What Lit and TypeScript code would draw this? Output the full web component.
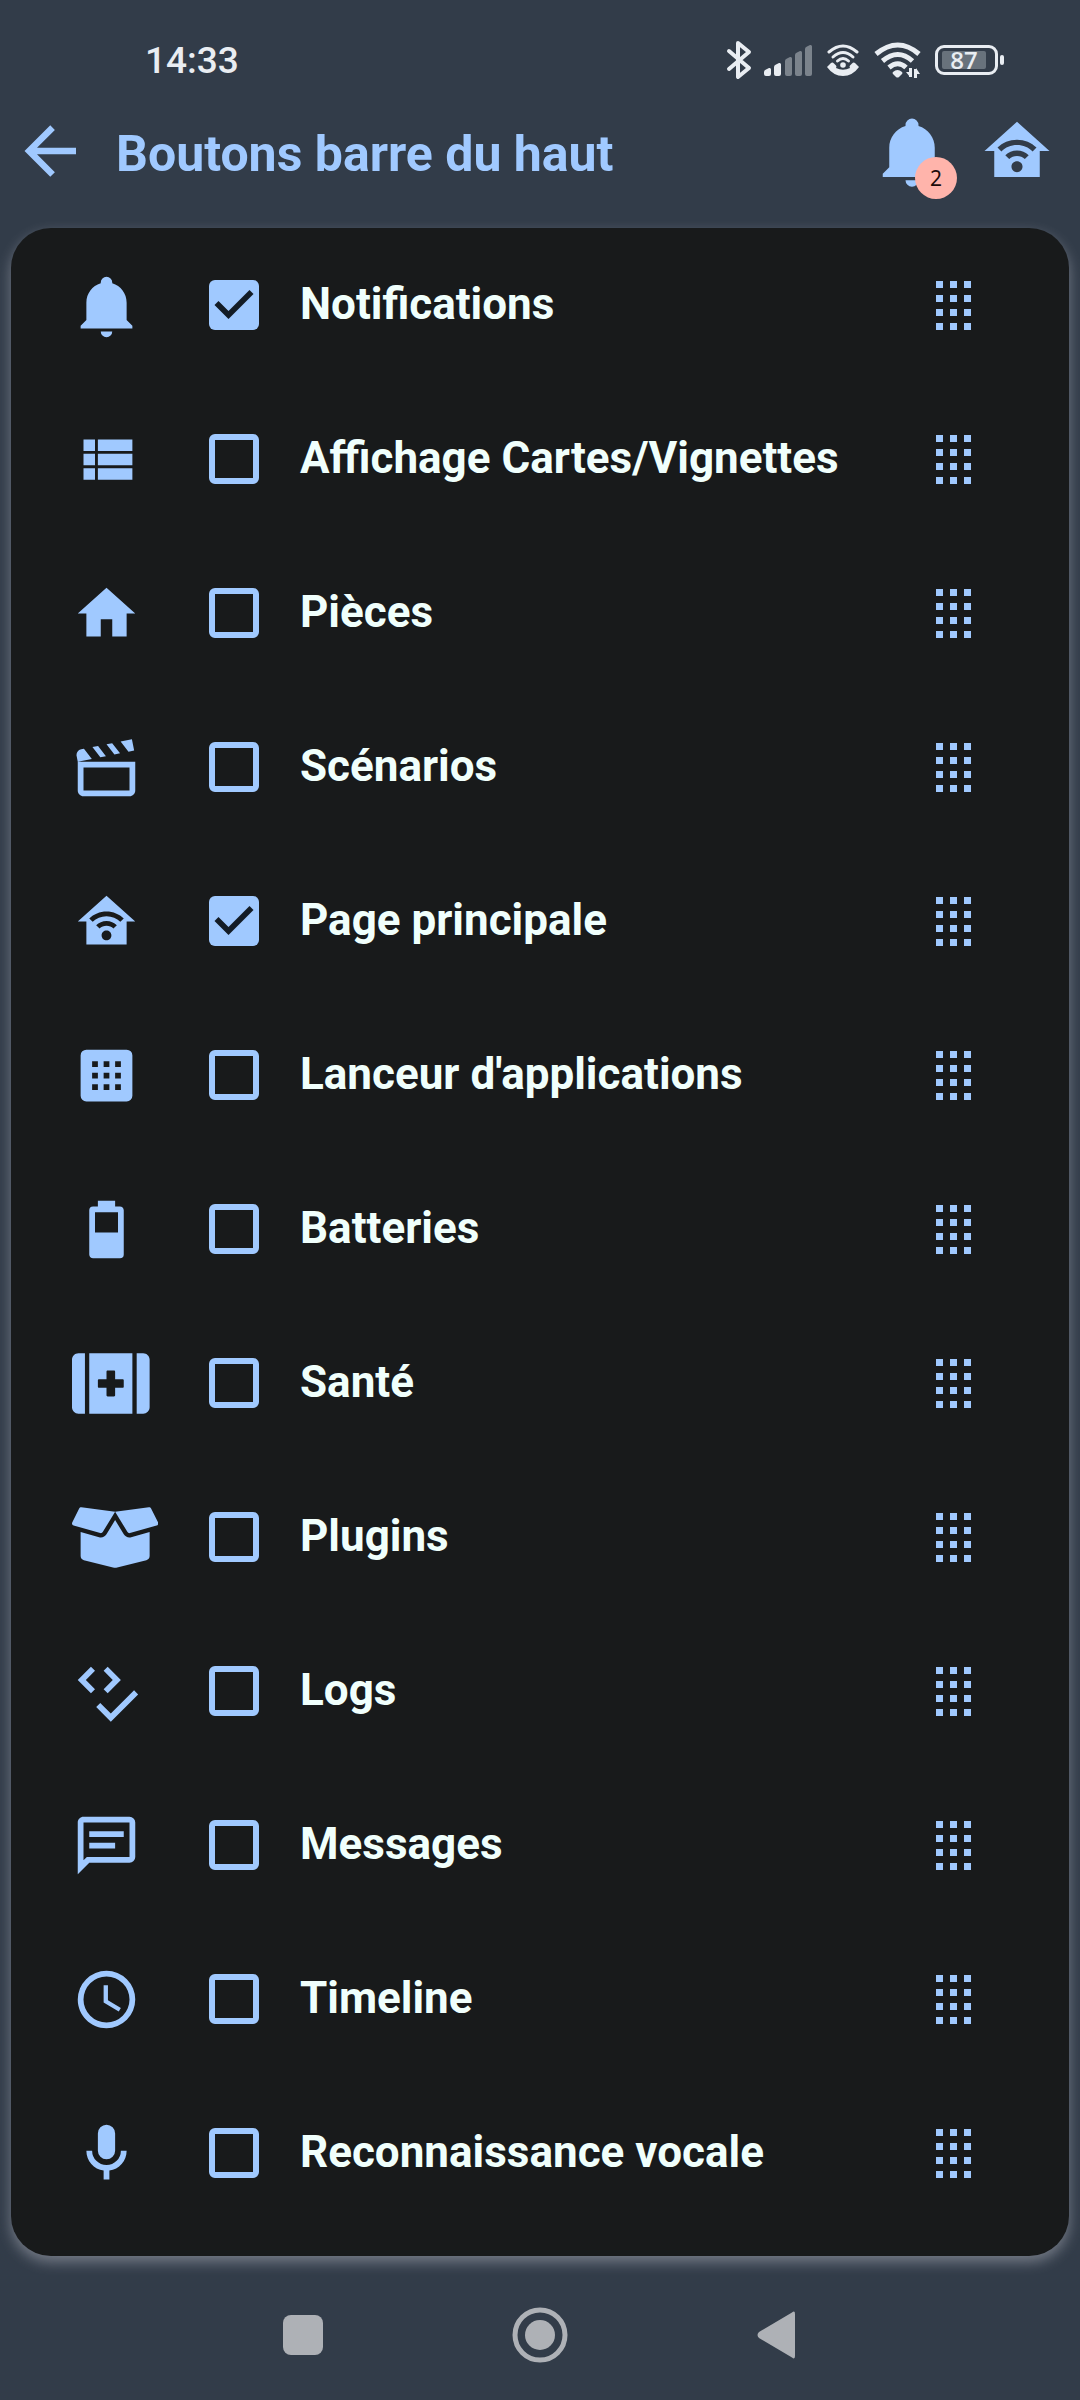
import { LitElement, html, svg, css, nothing } from "lit";
import { customElement, property, state } from "lit/decorators.js";

interface Glyph {
  width: number;
  height: number;
  path: string;
}

const glyph = (path: string, width = 24, height = 24): Glyph => ({ width, height, path });

const GLYPHS: Record<string, Glyph> = {
  back: glyph("M20,11V13H8L13.5,18.5L12.08,19.92L4.16,12L12.08,4.08L13.5,5.5L8,11H20Z"),
  bell: glyph("M21,19V20H3V19L5,17V11C5,7.9 7.03,5.17 10,4.29C10,4.19 10,4.1 10,4A2,2 0 0,1 12,2A2,2 0 0,1 14,4C14,4.1 14,4.19 14,4.29C16.97,5.17 19,7.9 19,11V17L21,19M14,21A2,2 0 0,1 12,23A2,2 0 0,1 10,21"),
  list: glyph("M9,5V9H21V5M9,19H21V15H9M9,14H21V10H9M4,9H8V5H4M4,19H8V15H4M4,14H8V10H4V14Z"),
  home: glyph("M10,20V14H14V20H19V12H22L12,3L2,12H5V20H10Z"),
  movie: glyph("M20.84 2.18L16.91 2.96L19.65 6.5L21.62 6.1L20.84 2.18M13.97 3.54L12 3.93L14.75 7.46L16.71 7.07L13.97 3.54M9.07 4.5L7.1 4.91L9.85 8.44L11.81 8.05L9.07 4.5M4.16 5.5L3.18 5.69A2 2 0 0 0 1.61 8.04L2 10L6.9 9.03L4.16 5.5M2 10V20C2 21.11 2.9 22 4 22H20C21.11 22 22 21.11 22 20V10H2M4 12H20V20H4V12Z"),
  homeWifi: glyph("M12,3L2,12H5V20H19V12H22L12,3M12,8.5C14.34,8.5 16.46,9.43 18,10.94L16.8,12.12C15.58,10.91 13.88,10.17 12,10.17C10.12,10.17 8.42,10.91 7.2,12.12L6,10.94C7.54,9.43 9.66,8.5 12,8.5M12,11.83C13.4,11.83 14.67,12.39 15.6,13.3L14.4,14.47C13.79,13.87 12.94,13.5 12,13.5C11.06,13.5 10.21,13.87 9.6,14.47L8.4,13.3C9.33,12.39 10.6,11.83 12,11.83M12,15.17C12.94,15.17 13.7,15.91 13.7,16.83C13.7,17.75 12.94,18.5 12,18.5C11.06,18.5 10.3,17.75 10.3,16.83C10.3,15.91 11.06,15.17 12,15.17Z"),
  launcher: glyph("M5,3H19A2,2 0 0,1 21,5V19A2,2 0 0,1 19,21H5A2,2 0 0,1 3,19V5A2,2 0 0,1 5,3M7,7V9H9V7H7M11,7V9H13V7H11M15,7V9H17V7H15M7,11V13H9V11H7M11,11V13H13V11H11M15,11V13H17V11H15M7,15V17H9V15H7M11,15V17H13V15H11M15,15V17H17V15H15Z"),
  battery: glyph("M16,13H8V6H16M16.67,4H15V2H9V4H7.33A1.33,1.33 0 0,0 6,5.33V20.67C6,21.4 6.6,22 7.33,22H16.67A1.33,1.33 0 0,0 18,20.67V5.33C18,4.6 17.4,4 16.67,4Z"),
  health: glyph("M0 80v352c0 26.5 21.5 48 48 48h48V32H48C21.5 32 0 53.5 0 80zm128 400h320V32H128v448zm64-248c0-4.4 3.6-8 8-8h56v-56c0-4.4 3.6-8 8-8h48c4.4 0 8 3.6 8 8v56h56c4.4 0 8 3.6 8 8v48c0 4.4-3.6 8-8 8h-56v56c0 4.4-3.6 8-8 8h-48c-4.4 0-8-3.6-8-8v-56h-56c-4.4 0-8-3.6-8-8v-48zM528 32h-48v448h48c26.5 0 48-21.5 48-48V80c0-26.5-21.5-48-48-48z", 576, 512),
  box: glyph("M425.7 256c-16.9 0-32.8-9-41.4-23.4L320 126l-64.2 106.6c-8.7 14.5-24.6 23.5-41.5 23.5-4.5 0-9-.6-13.3-1.9L64 215v178c0 14.7 10 27.5 24.2 31l216.2 54.1c10.2 2.5 20.9 2.5 31 0L551.8 424c14.2-3.6 24.2-16.4 24.2-31V215l-137 39.1c-4.3 1.3-8.8 1.9-13.3 1.9zm212.6-112.2L586.8 41c-3.1-6.2-9.8-9.8-16.7-8.9L320 64l91.7 152.1c3.8 6.3 11.4 9.3 18.5 7.3l197.9-56.5c9.9-2.9 14.7-13.9 10.2-23.1zM53.2 41L1.7 143.8c-4.6 9.2.3 20.2 10.1 23l197.9 56.5c7.1 2 14.7-1 18.5-7.3L320 64 69.8 32.1c-6.9-.8-13.5 2.7-16.6 8.9z", 640, 512),
  logs: glyph("M6.59,3.41L2,8L6.59,12.6L8,11.18L4.82,8L8,4.82L6.59,3.41M12.41,3.41L11,4.82L14.18,8L11,11.18L12.41,12.6L17,8L12.41,3.41M21.59,11.59L13.5,19.68L9.83,16L8.42,17.41L13.5,22.5L23,13L21.59,11.59Z"),
  message: glyph("M20,2A2,2 0 0,1 22,4V16A2,2 0 0,1 20,18H6L2,22V4C2,2.89 2.9,2 4,2H20M4,4V17.17L5.17,16H20V4H4M6,7H18V9H6V7M6,11H15V13H6V11Z"),
  clock: glyph("M12,20A8,8 0 0,0 20,12A8,8 0 0,0 12,4A8,8 0 0,0 4,12A8,8 0 0,0 12,20M12,2A10,10 0 0,1 22,12A10,10 0 0,1 12,22C6.47,22 2,17.5 2,12A10,10 0 0,1 12,2M12.5,7V12.25L17,14.92L16.25,16.15L11,13V7H12.5Z"),
  mic: glyph("M12,2A3,3 0 0,1 15,5V11A3,3 0 0,1 12,14A3,3 0 0,1 9,11V5A3,3 0 0,1 12,2M19,11C19,14.53 16.39,17.44 13,17.93V21H11V17.93C7.61,17.44 5,14.53 5,11H7A5,5 0 0,0 12,16A5,5 0 0,0 17,11H19Z"),
};

interface Entry {
  id: string;
  icon: string;
  label: string;
  enabled: boolean;
}

const ENTRIES: Entry[] = [
  { id: "notifications", icon: "bell", label: "Notifications", enabled: true },
  { id: "affichage", icon: "list", label: "Affichage Cartes/Vignettes", enabled: false },
  { id: "pieces", icon: "home", label: "Pièces", enabled: false },
  { id: "scenarios", icon: "movie", label: "Scénarios", enabled: false },
  { id: "page", icon: "homeWifi", label: "Page principale", enabled: true },
  { id: "lanceur", icon: "launcher", label: "Lanceur d'applications", enabled: false },
  { id: "batteries", icon: "battery", label: "Batteries", enabled: false },
  { id: "sante", icon: "health", label: "Santé", enabled: false },
  { id: "plugins", icon: "box", label: "Plugins", enabled: false },
  { id: "logs", icon: "logs", label: "Logs", enabled: false },
  { id: "messages", icon: "message", label: "Messages", enabled: false },
  { id: "timeline", icon: "clock", label: "Timeline", enabled: false },
  { id: "vocale", icon: "mic", label: "Reconnaissance vocale", enabled: false },
];

@customElement("glyph-icon")
class GlyphIcon extends LitElement {
  @property() name = "";

  static styles = css`
    :host {
      display: block;
      height: 69px;
    }
    .glyph {
      display: block;
      height: 100%;
      fill: currentColor;
    }
  `;

  render() {
    const g = GLYPHS[this.name];
    return g
      ? html`<svg class="glyph" viewBox="0 0 ${g.width} ${g.height}" aria-hidden="true">
          <path fill-rule="evenodd" d=${g.path}></path>
        </svg>`
      : nothing;
  }
}

@customElement("status-bar")
class StatusBar extends LitElement {
  static styles = css`
    :host {
      display: flex;
      align-items: center;
      justify-content: space-between;
      box-sizing: border-box;
      height: 112px;
      padding: 8px 76px 0 145px;
      color: #e9edf2;
    }
    .time {
      padding-top: 2px;
      font-size: 37px;
      line-height: 44px;
      font-weight: 500;
    }
    .indicators {
      display: flex;
      align-items: center;
    }
    .indicators svg {
      display: block;
    }
    .bluetooth { margin-right: 12px; }
    .signal { margin-right: 12px; }
    .call { margin-right: 14px; }
    .wifi { margin-right: 14px; }
    .battery {
      display: flex;
      align-items: center;
      gap: 2px;
    }
    .cell {
      display: flex;
      box-sizing: border-box;
      width: 63px;
      height: 30px;
      padding: 3px 9px 3px 4px;
      border: 3px solid currentColor;
      border-radius: 9px;
    }
    .level {
      flex: 1;
      border-radius: 2px;
      background: #68727c;
      font: 600 24px/18px "Open Sans", "Noto Sans", sans-serif;
      text-align: center;
    }
    .nub {
      width: 4px;
      height: 10px;
      border-radius: 2px;
      background: currentColor;
    }
  `;

  render() {
    const bars = [
      { x: 0, top: 25, on: true },
      { x: 10, top: 20, on: true },
      { x: 21, top: 14, on: false },
      { x: 31, top: 8, on: false },
      { x: 41, top: 2, on: false },
    ];
    return html`
      <time class="time">14:33</time>
      <div class="indicators">
        <svg class="bluetooth" width="26" height="40" viewBox="0 0 26 40" fill="none" stroke="currentColor"
          stroke-width="4" stroke-linecap="round" stroke-linejoin="round" aria-label="Bluetooth">
          <path d="M3 11L23 28L12 37V3L23 12L3 29"></path>
        </svg>
        <svg class="signal" width="50" height="34" viewBox="0 0 50 34" fill="currentColor" aria-label="Signal">
          ${bars.map((b) => svg`<path opacity=${b.on ? 1 : 0.4}
            d="M${b.x} ${b.top + 4}q0-2 2-2.500l3-1.500q2-.5 2 1.500V31q0 2-2 2H${b.x + 2}q-2 0-2-2z"></path>`)}
        </svg>
        <svg class="call" width="34" height="34" viewBox="0 0 34 34" fill="none" stroke="currentColor"
          stroke-width="3" stroke-linecap="round" aria-label="Appels Wi-Fi">
          <path d="M3 9Q17-3 31 9"></path>
          <path d="M7 14Q17 5 27 14"></path>
          <path d="M11.500 18Q17 13 22.500 18"></path>
          <circle cx="17" cy="22" r="2.800" fill="currentColor" stroke="none"></circle>
          <path fill="currentColor" stroke="none"
            d="M1 24L5 20q1.500-1 3 .5l2 2q1 1 0 2.500q7 3.500 14 0q-1-1.500 0-2.500l2-2q1.500-1.500 3-.5l4 4q-6.500 9-16 9T1 24z"></path>
        </svg>
        <svg class="wifi" width="47" height="36" viewBox="0 0 47 36" fill="none" stroke="currentColor"
          stroke-width="5" aria-label="Wi-Fi">
          <path d="M2 12Q24-6 45 12"></path>
          <path d="M8.500 19Q24 6 38.500 19"></path>
          <path d="M15 25.500Q24 18 32 25.500"></path>
          <path fill="currentColor" stroke="none" d="M19 30q4.500-4 9 0q1 1 0 2l-3 3q-1.500 1-3 0l-3-3q-1-1 0-2z"></path>
          <g stroke-width="3"><path d="M36.500 26v9M41.500 36v-9"></path></g>
          <path fill="currentColor" stroke="none" d="M32 30h4v5zM46 32h-4v-6z"></path>
        </svg>
        <div class="battery">
          <div class="cell"><div class="level">87</div></div>
          <div class="nub"></div>
        </div>
      </div>
    `;
  }
}

@customElement("top-bar")
class TopBar extends LitElement {
  static styles = css`
    :host {
      display: flex;
      align-items: center;
      gap: 27px;
      margin-bottom: 38px;
      padding: 0 24px 0 11px;
      color: #a0c9ff;
    }
    .action {
      position: relative;
      width: 78px;
      height: 78px;
      padding: 0;
      border: 0;
      background: none;
      color: inherit;
      cursor: pointer;
    }
    .action glyph-icon {
      height: 78px;
    }
    .title {
      flex: 1;
      margin: 0;
      padding-top: 6px;
      font-size: 50px;
      line-height: 60px;
      font-weight: 700;
    }
    .badge {
      position: absolute;
      left: 42px;
      top: 45px;
      width: 42px;
      height: 42px;
      border-radius: 50%;
      background: #ffb4ab;
      color: #1c0b0a;
      font: 400 21px/42px "Noto Sans", sans-serif;
      text-align: center;
    }
  `;

  render() {
    return html`
      <button class="action" aria-label="Retour"><glyph-icon name="back"></glyph-icon></button>
      <h1 class="title">Boutons barre du haut</h1>
      <button class="action" aria-label="Notifications">
        <glyph-icon name="bell"></glyph-icon>
        <span class="badge">2</span>
      </button>
      <button class="action" aria-label="Page principale"><glyph-icon name="homeWifi"></glyph-icon></button>
    `;
  }
}

@customElement("entry-list")
class EntryList extends LitElement {
  @state() private entries = ENTRIES;

  static styles = css`
    :host {
      display: block;
      margin: 0 11px;
      padding-bottom: 26px;
      border-radius: 40px;
      background: #181a1b;
      box-shadow: 0 6px 14px rgba(214, 214, 226, 0.4);
    }
    .list {
      margin: 0;
      padding: 0;
      list-style: none;
    }
    .row {
      display: grid;
      grid-template-columns: 137px 50px 1fr 59px;
      align-items: center;
      height: 154px;
      padding: 0 86px 0 61px;
      color: #a0c9ff;
    }
    .box {
      appearance: none;
      display: block;
      width: 50px;
      height: 50px;
      margin: 0;
      border: 6px solid currentColor;
      border-radius: 6px;
      color: inherit;
      cursor: pointer;
    }
    .box:checked {
      border: 0;
      background: currentColor;
    }
    .box:checked::before {
      content: "";
      display: block;
      width: 50px;
      height: 50px;
      background: #131c26;
      clip-path: polygon(11% 50%, 19% 42%, 39% 62%, 81% 20%, 89% 28%, 39% 78%);
    }
    .label {
      padding: 0 41px 2px;
      color: #f0fffc;
      font-size: 44px;
      line-height: 52px;
      font-weight: 700;
      cursor: pointer;
    }
    .handle {
      width: 59px;
      height: 73px;
      padding: 12px;
      border: 0;
      background: none;
      color: inherit;
      cursor: grab;
    }
    .dots {
      display: block;
      fill: currentColor;
    }
  `;

  private toggle(id: string) {
    this.entries = this.entries.map((e) => (e.id === id ? { ...e, enabled: !e.enabled } : e));
  }

  render() {
    return html`
      <ul class="list">
        ${this.entries.map(
          (e) => html`
            <li class="row">
              <glyph-icon name=${e.icon}></glyph-icon>
              <input class="box" type="checkbox" id=${e.id} .checked=${e.enabled} @change=${() => this.toggle(e.id)} />
              <label class="label" for=${e.id}>${e.label}</label>
              <button class="handle" aria-label="Déplacer ${e.label}">
                <svg class="dots" width="35" height="49" viewBox="0 0 35 49" aria-hidden="true">
                  ${[0, 14, 28, 42].map((y) => [0, 14, 28].map((x) => svg`<rect x=${x} y=${y} width="7" height="7"></rect>`))}
                </svg>
              </button>
            </li>
          `
        )}
      </ul>
    `;
  }
}

@customElement("nav-bar")
class NavBar extends LitElement {
  static styles = css`
    :host {
      display: flex;
      align-items: center;
      justify-content: center;
      gap: 141px;
      box-sizing: border-box;
      height: 144px;
      padding-top: 14px;
      color: #aeb1b6;
    }
    .key {
      display: grid;
      place-items: center;
      width: 96px;
      height: 96px;
      padding: 0;
      border: 0;
      background: none;
      color: inherit;
      cursor: pointer;
    }
    .shape {
      display: block;
      fill: currentColor;
    }
  `;

  render() {
    return html`
      <button class="key" aria-label="Applications récentes">
        <svg class="shape" width="40" height="40" viewBox="0 0 40 40"><rect width="40" height="40" rx="8"></rect></svg>
      </button>
      <button class="key" aria-label="Accueil">
        <svg class="shape" width="56" height="56" viewBox="0 0 56 56">
          <circle cx="28" cy="28" r="25" fill="none" stroke="currentColor" stroke-width="5"></circle>
          <circle cx="28" cy="28" r="15"></circle>
        </svg>
      </button>
      <button class="key" aria-label="Retour">
        <svg class="shape" width="40" height="48" viewBox="0 0 40 48">
          <path d="M35 1.500Q38-1 38 3V45Q38 49 35 46.500L2 27Q-1 24 2 21Z"></path>
        </svg>
      </button>
    `;
  }
}

@customElement("app-root")
class AppRoot extends LitElement {
  static styles = css`
    :host {
      display: block;
      min-height: 100vh;
      background: #323c49;
      font-family: Roboto, "Noto Sans", sans-serif;
    }
  `;

  render() {
    return html`
      <status-bar></status-bar>
      <top-bar></top-bar>
      <entry-list></entry-list>
      <nav-bar></nav-bar>
    `;
  }
}
